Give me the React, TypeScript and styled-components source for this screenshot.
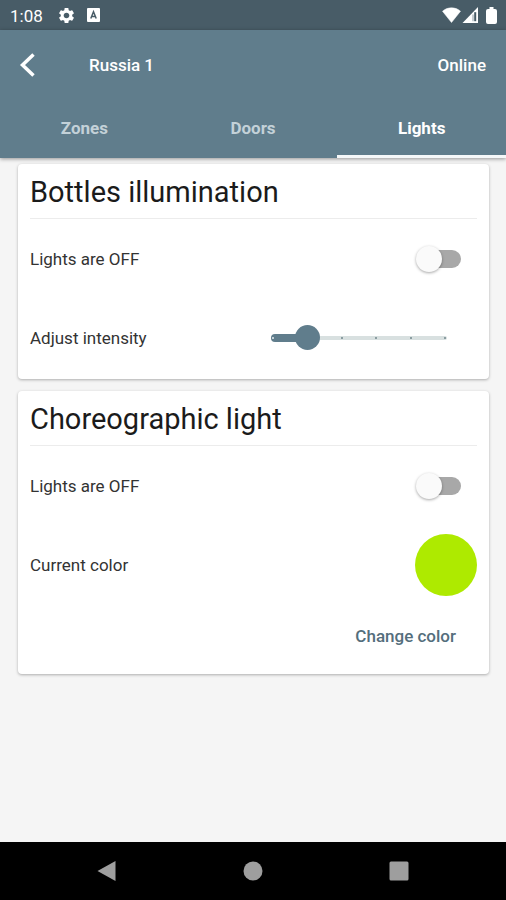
import React, { useState } from "react";
import styled, { createGlobalStyle } from "styled-components";
import { MdSettings } from "react-icons/md";

const color = {
  primary: "#607d8c",
  primaryDark: "#485c67",
  page: "#f5f5f5",
  text: "#333333",
};

const GlobalStyle = createGlobalStyle`
  *, *::before, *::after { box-sizing: border-box; }
  body {
    margin: 0;
    background: ${color.page};
    color: ${color.text};
    font-family: Roboto, "Liberation Sans", sans-serif;
    font-size: 17px;
    line-height: 20px;
  }
  button { border: 0; padding: 0; background: none; font: inherit; cursor: pointer; }
  svg { display: block; }
`;

const Screen = styled.div`
  min-height: 100vh;
  display: flex;
  flex-direction: column;
`;

const StatusBar = styled.div`
  display: flex;
  align-items: center;
  height: 30px;
  padding: 0 9px 0 10px;
  background: ${color.primaryDark};
  color: #ffffff;
`;

const Clock = styled.time`
  padding-top: 2px;
  margin-right: 14px;
`;

const StatusIcons = styled.div<{ $end?: boolean }>`
  display: flex;
  align-items: center;
  gap: ${(p) => (p.$end ? "1px" : "11px")};
  margin-left: ${(p) => (p.$end ? "auto" : "0")};
`;

const Header = styled.header`
  position: relative;
  z-index: 1;
  background: ${color.primary};
  color: #ffffff;
  box-shadow: 0 1px 4px rgba(0, 0, 0, 0.4);
`;

const AppBar = styled.div`
  display: flex;
  align-items: center;
  height: 70px;
  padding: 0 20px 0 16px;
`;

const BackButton = styled.button`
  color: inherit;
`;

const DeviceName = styled.h1`
  flex: 1;
  margin: 0 0 0 49px;
  font-size: 17px;
  font-weight: 500;
`;

const DeviceStatus = styled.span`
  font-weight: 500;
`;

const TabList = styled.div`
  display: grid;
  grid-template-columns: repeat(3, 1fr);
`;

const TabButton = styled.button<{ $active: boolean }>`
  height: 58px;
  padding-top: 1px;
  border-bottom: 3px solid ${(p) => (p.$active ? "#f5f8f9" : "transparent")};
  color: ${(p) => (p.$active ? "#ffffff" : "#c3d1d8")};
  font-weight: 700;
`;

const Content = styled.main`
  flex: 1;
  display: flex;
  flex-direction: column;
  gap: 12px;
  padding: 6px 17px 24px 18px;
`;

const Card = styled.section`
  padding: 0 12px;
  border-radius: 4px;
  background: #ffffff;
  box-shadow: 0 1px 3px rgba(0, 0, 0, 0.3);
`;

const CardTitle = styled.h2`
  margin: 0;
  padding: 9px 0 7px;
  border-bottom: 1px solid #ececec;
  color: #1b1b1b;
  font-size: 29px;
  font-weight: 400;
  line-height: 38px;
`;

const Row = styled.div`
  display: flex;
  align-items: center;
  justify-content: space-between;
  min-height: 79px;
`;

const RowLabel = styled.label`
  color: ${color.text};
`;

const Switch = styled.input`
  appearance: none;
  display: grid;
  align-items: center;
  width: 45px;
  height: 26px;
  margin: 0 16px 0 0;
  cursor: pointer;

  &::before, &::after {
    content: "";
    grid-area: 1 / 1;
  }
  &::before {
    height: 18px;
    margin-left: 6px;
    border-radius: 9px;
    background: #a8a8a8;
  }
  &::after {
    width: 26px;
    height: 26px;
    border-radius: 50%;
    background: #fafafa;
    box-shadow: 0 1px 3px rgba(0, 0, 0, 0.35);
  }
  &:checked::before { margin: 0 6px 0 0; background: #a9bbc5; }
  &:checked::after { justify-self: end; background: ${color.primary}; }
`;

const SliderBox = styled.div`
  display: grid;
  align-items: center;
  width: 196px;
  margin-right: 20px;

  & > * { grid-area: 1 / 1; }
`;

const Rail = styled.div`
  height: 4px;
  margin: 0 10px;
  border-radius: 2px;
  background: #d8e0e0;
`;

const Fill = styled.div`
  height: 8px;
  margin: 0 10px;
  border-radius: 4px;
  background: ${color.primary};
`;

const Ticks = styled.div`
  display: flex;
  justify-content: space-between;
  margin: 0 11px;
`;

const Tick = styled.span<{ $filled: boolean }>`
  width: 2px;
  height: 2px;
  background: ${(p) => (p.$filled ? "#c4d2d8" : "#8b9da1")};
`;

const Range = styled.input`
  appearance: none;
  width: 100%;
  height: 25px;
  margin: 0;
  background: transparent;
  cursor: pointer;

  &::-webkit-slider-thumb {
    appearance: none;
    width: 25px;
    height: 25px;
    border-radius: 50%;
    background: ${color.primary};
  }
`;

const Swatch = styled.div`
  width: 62px;
  height: 62px;
  border-radius: 50%;
  background: #aeea00;
`;

const Actions = styled.div`
  display: flex;
  justify-content: flex-end;
  padding: 12px 9px 18px;
`;

const TextButton = styled.button`
  height: 40px;
  padding: 0 12px;
  color: #546e7c;
  font-weight: 500;
`;

const CardBody = styled.div`
  padding-bottom: 2px;
`;

const SystemNav = styled.nav`
  display: grid;
  grid-template-columns: repeat(3, 1fr);
  height: 58px;
  padding: 0 34px;
  background: #000000;
`;

const NavButton = styled.button`
  display: grid;
  place-items: center;
  color: #9e9e9e;
`;

const MAX_INTENSITY = 5;
const levels = Array.from({ length: MAX_INTENSITY + 1 }, (_, i) => i);
const tabs = ["Zones", "Doors", "Lights"];

function LightSwitch({ id }: { id: string }) {
  const [on, setOn] = useState(false);
  return (
    <Row>
      <RowLabel htmlFor={id}>Lights are {on ? "ON" : "OFF"}</RowLabel>
      <Switch id={id} type="checkbox" role="switch" checked={on} onChange={(e) => setOn(e.target.checked)} />
    </Row>
  );
}

function IntensitySlider() {
  const [level, setLevel] = useState(1);
  return (
    <Row>
      <RowLabel htmlFor="intensity">Adjust intensity</RowLabel>
      <SliderBox>
        <Rail />
        <Fill style={{ width: `${(level / MAX_INTENSITY) * 88}%` }} />
        <Ticks>
          {levels.map((n) => (
            <Tick key={n} $filled={n < level} />
          ))}
        </Ticks>
        <Range
          id="intensity"
          type="range"
          min={0}
          max={MAX_INTENSITY}
          value={level}
          onChange={(e) => setLevel(Number(e.target.value))}
        />
      </SliderBox>
    </Row>
  );
}

export default function App() {
  const [active, setActive] = useState("Lights");
  return (
    <Screen>
      <GlobalStyle />
      <StatusBar>
        <Clock>1:08</Clock>
        <StatusIcons>
          <MdSettings size={19} />
          <svg width="13" height="14" viewBox="0 0 13 14" aria-hidden="true">
            <rect width="13" height="14" rx="1" fill="#fff" />
            <path d="M3.8 10.5 6.5 3.8l2.7 6.7M4.8 8.4h3.4" fill="none" stroke={color.primaryDark} strokeWidth="1.5" />
          </svg>
        </StatusIcons>
        <StatusIcons $end>
          <svg width="19" height="16" viewBox="0 0 19 16" aria-hidden="true">
            <path d="M0.5 4.2C5.5-.3 13.5-.3 18.5 4.2L9.5 15.5Z" fill="#fff" stroke="#fff" strokeWidth="0.5" strokeLinejoin="round" />
          </svg>
          <svg width="23" height="16" viewBox="0 0 23 16" aria-hidden="true">
            <path d="M0.5 16 16 0V16Z" fill="#fff" />
            <path d="M11 7.5v6.7" stroke="#b4bec3" strokeWidth="1.5" />
            <path d="M13.2 5.2v9" stroke={color.primaryDark} strokeWidth="2" />
          </svg>
          <svg width="11" height="17" viewBox="0 0 11 17" aria-hidden="true">
            <path d="M3.5 0h4v2H9a2 2 0 0 1 2 2v11a2 2 0 0 1-2 2H2a2 2 0 0 1-2-2V4a2 2 0 0 1 2-2h1.5Z" fill="#fff" />
          </svg>
        </StatusIcons>
      </StatusBar>
      <Header>
        <AppBar>
          <BackButton aria-label="Back">
            <svg width="24" height="24" viewBox="0 0 24 24" fill="none" stroke="currentColor" strokeWidth="3.5">
              <path d="M17.5 1.5 6.5 12l11 10.5" />
            </svg>
          </BackButton>
          <DeviceName>Russia 1</DeviceName>
          <DeviceStatus>Online</DeviceStatus>
        </AppBar>
        <TabList role="tablist">
          {tabs.map((name) => (
            <TabButton
              key={name}
              role="tab"
              aria-selected={name === active}
              $active={name === active}
              onClick={() => setActive(name)}
            >
              {name}
            </TabButton>
          ))}
        </TabList>
      </Header>
      <Content>
        <Card>
          <CardTitle>Bottles illumination</CardTitle>
          <CardBody>
            <LightSwitch id="bottles-lights" />
            <IntensitySlider />
          </CardBody>
        </Card>
        <Card>
          <CardTitle>Choreographic light</CardTitle>
          <LightSwitch id="choreographic-lights" />
          <Row>
            <RowLabel as="span">Current color</RowLabel>
            <Swatch role="img" aria-label="Lime green" />
          </Row>
          <Actions>
            <TextButton>Change color</TextButton>
          </Actions>
        </Card>
      </Content>
      <SystemNav aria-label="System">
        <NavButton aria-label="Back">
          <svg width="20" height="20" viewBox="0 0 20 20" fill="currentColor">
            <path d="M0.5 10 18.5 0v20Z" />
          </svg>
        </NavButton>
        <NavButton aria-label="Home">
          <svg width="20" height="20" viewBox="0 0 20 20" fill="currentColor">
            <circle cx="10" cy="10" r="9.5" />
          </svg>
        </NavButton>
        <NavButton aria-label="Recent apps">
          <svg width="20" height="20" viewBox="0 0 20 20" fill="currentColor">
            <rect x="0.5" y="0.5" width="19" height="19" rx="1.5" />
          </svg>
        </NavButton>
      </SystemNav>
    </Screen>
  );
}
